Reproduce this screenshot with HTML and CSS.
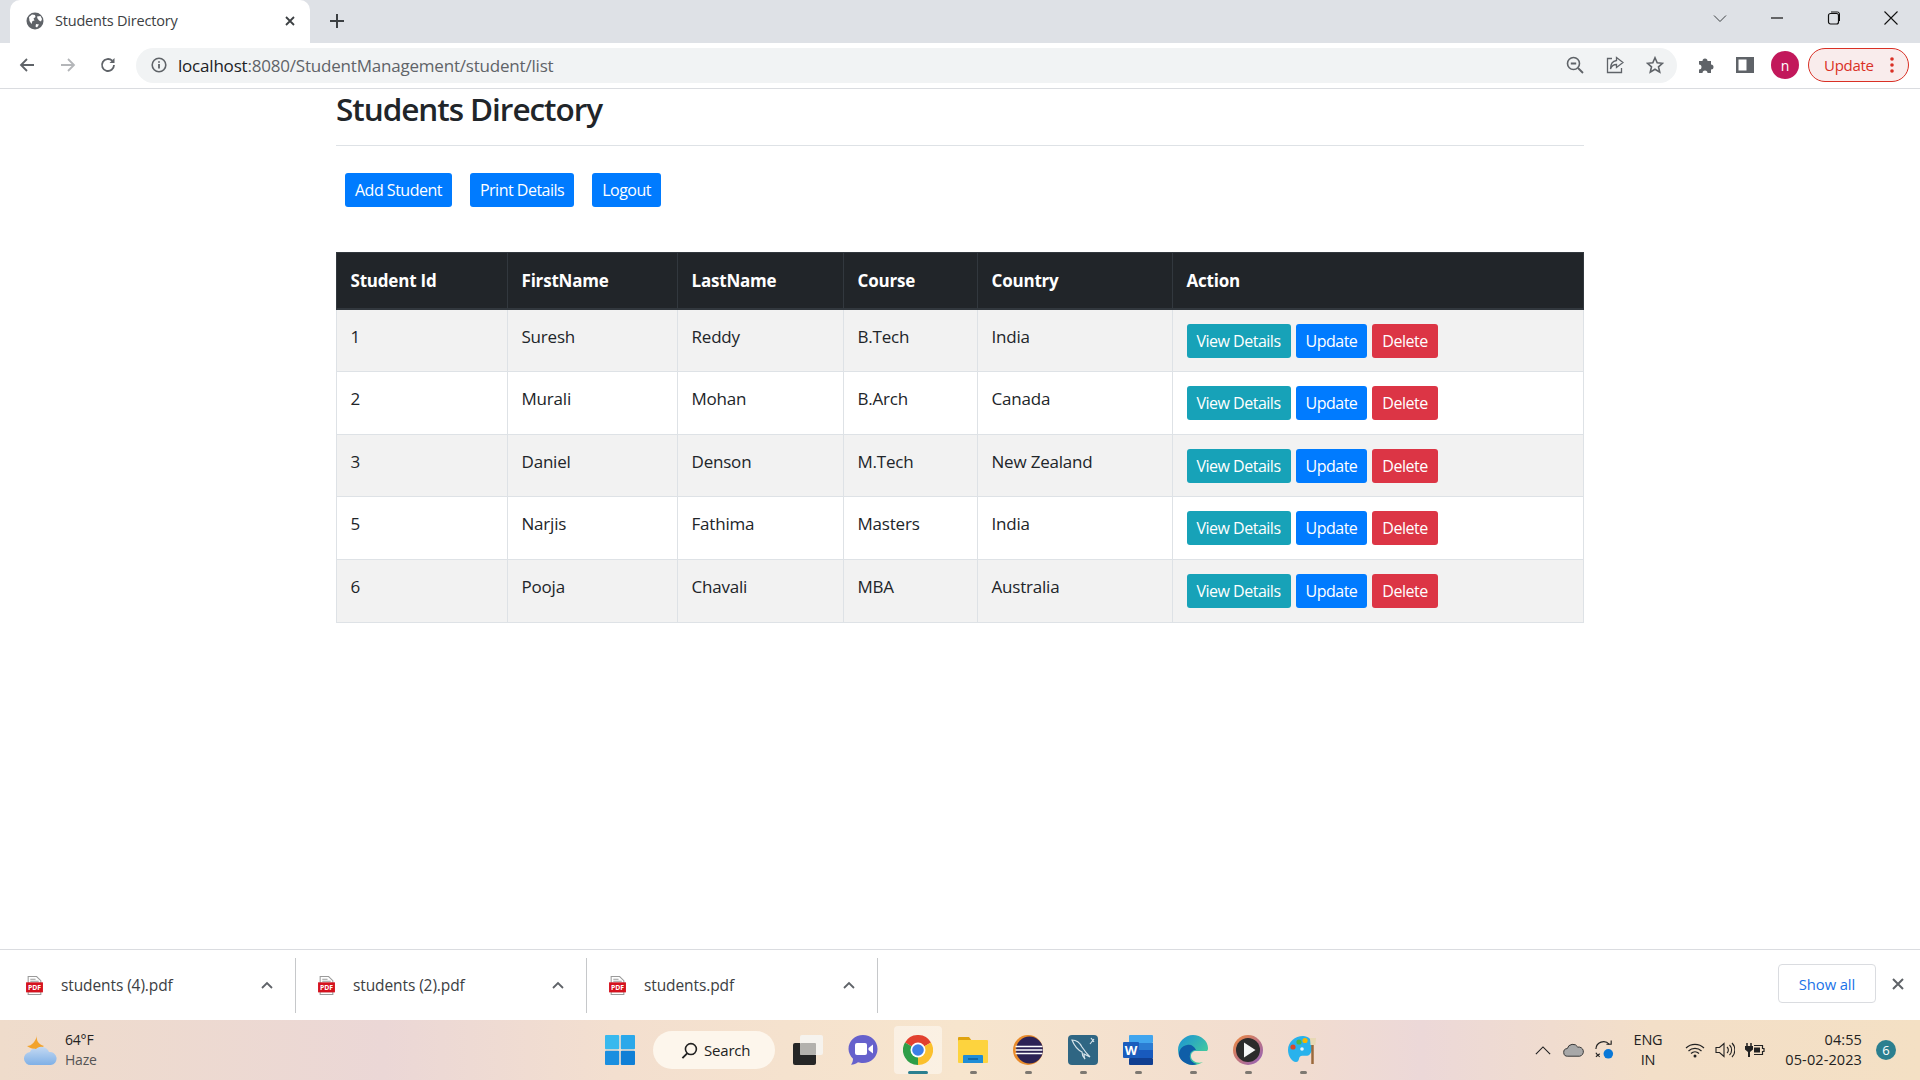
FILE: index.html
```html
<!DOCTYPE html>
<html lang="en">
<head>
  <meta charset="UTF-8" />
  <title>Students Directory</title>
  <link rel="stylesheet" href="styles.css">
</head>
<body>
  <div class="screen">
    <div class="tab-strip">
      <div class="tab">
        <svg class="favicon" viewBox="0 0 18 18"><circle cx="9" cy="9" r="8.5" fill="#5f6368"/><path d="M3 5l3-2.5 3 .5.5 2-2 1.500 1 2-2 .5-1 3L3.500 9z" fill="#fff"/><path d="M11 4.500l3.500-.5 1.500 3-1 2.500-2-1-1.500-2zM10 12l3 .5-2 3-1.500-1z" fill="#fff"/></svg>
        <span class="tab-title">Students Directory</span>
        <svg class="tab-close" viewBox="0 0 12 12"><path d="M2 2l8 8M10 2l-8 8" stroke="#3c4043" stroke-width="1.800" fill="none"/></svg>
      </div>
      <svg class="new-tab" viewBox="0 0 14 14"><path d="M7 0v14M0 7h14" stroke="#3c4043" stroke-width="2" fill="none"/></svg>
      <div class="window-controls">
        <svg viewBox="0 0 14 14"><path d="M1 4.500l6 6 6-6" stroke="#3c4043" stroke-width="1" fill="none"/></svg>
        <svg viewBox="0 0 14 14"><path d="M1 7h12" stroke="#111" stroke-width="1.200" fill="none"/></svg>
        <svg viewBox="0 0 14 14"><rect x="1.500" y="2.500" width="10" height="10.500" rx="2" stroke="#111" stroke-width="1.200" fill="none"/><path d="M4 1h6.500a2 2 0 0 1 2 2v7" stroke="#111" stroke-width="1" fill="none"/></svg>
        <svg viewBox="0 0 14 14"><path d="M.5.500l13 13M13.500.500l-13 13" stroke="#111" stroke-width="1.100" fill="none"/></svg>
      </div>
    </div>

    <div class="toolbar">
      <svg class="nav-icon" viewBox="0 0 16 16"><path d="M15 8H2M8 2L2 8l6 6" stroke="#5f6368" stroke-width="1.800" fill="none"/></svg>
      <svg class="nav-icon" viewBox="0 0 16 16"><path d="M1 8h13M8 2l6 6-6 6" stroke="#b4b6b9" stroke-width="1.800" fill="none"/></svg>
      <svg class="nav-icon" viewBox="0 0 16 16"><path d="M14 8a6 6 0 1 1-1.800-4.300" stroke="#5f6368" stroke-width="1.800" fill="none"/><path d="M14.500 1v5h-5z" fill="#5f6368"/></svg>
      <div class="omnibox">
        <svg class="info-icon" viewBox="0 0 16 16"><circle cx="8" cy="8" r="6.800" stroke="#5f6368" stroke-width="1.600" fill="none"/><path d="M8 7v4.500M8 4.300v1.500" stroke="#5f6368" stroke-width="1.800" fill="none"/></svg>
        <span class="url"><span class="url-host">localhost</span>:8080/StudentManagement/student/list</span>
        <div class="omni-actions">
          <svg viewBox="0 0 18 18"><circle cx="7.500" cy="7.500" r="6" stroke="#5f6368" stroke-width="1.600" fill="none"/><path d="M4.800 7.500h5.400M12 12l5 5" stroke="#5f6368" stroke-width="1.800" fill="none"/></svg>
          <svg viewBox="0 0 18 18"><path d="M6 2.500H1.500v14h14V12" stroke="#5f6368" stroke-width="1.300" fill="none"/><path d="M10.500 1.500l6.500 5-6.500 5V8.500C7.500 8.500 5.500 10 4.500 13c0-5 2.500-8 6-8.500z" stroke="#5f6368" stroke-width="1.300" fill="none"/></svg>
          <svg viewBox="0 0 18 18"><path d="M9 1.800l2.200 5 5.300.5-4 3.500 1.200 5.300L9 13.300l-4.700 2.800 1.200-5.300-4-3.500 5.300-.5z" stroke="#5f6368" stroke-width="1.600" fill="none"/></svg>
        </div>
      </div>
      <svg class="puzzle" viewBox="0 0 18 18"><path d="M2 5h3.500a2.500 2.500 0 1 1 5 0H14v3.500a2.500 2.500 0 1 1 0 5V17h-3.500a2.500 2.500 0 1 0-5 0H2v-3.500a2.500 2.500 0 1 0 0-5z" fill="#5f6368"/></svg>
      <svg class="side-panel" viewBox="0 0 18 18"><path d="M0 1h18v16H0zM2.500 3.500v11h8v-11z" fill="#5f6368" fill-rule="evenodd"/></svg>
      <div class="avatar">n</div>
      <div class="update-pill">
        <span>Update</span>
        <svg viewBox="0 0 4 16"><circle cx="2" cy="2" r="1.800" fill="#d93025"/><circle cx="2" cy="8" r="1.800" fill="#d93025"/><circle cx="2" cy="14" r="1.800" fill="#d93025"/></svg>
      </div>
    </div>

    <main class="page">
      <div class="content">
        <h1 class="title">Students Directory</h1>
        <hr class="rule">
        <div class="top-actions">
          <a class="btn btn-blue">Add Student</a>
          <a class="btn btn-blue">Print Details</a>
          <a class="btn btn-blue">Logout</a>
        </div>
        <table class="students">
          <colgroup>
            <col class="col-id"><col class="col-first"><col class="col-last"><col class="col-course"><col class="col-country"><col>
          </colgroup>
          <thead>
            <tr><th>Student Id</th><th>FirstName</th><th>LastName</th><th>Course</th><th>Country</th><th>Action</th></tr>
          </thead>
          <tbody>
            <tr>
              <td>1</td><td>Suresh</td><td>Reddy</td><td>B.Tech</td><td>India</td>
              <td class="actions"><a class="btn btn-teal">View Details</a><a class="btn btn-blue">Update</a><a class="btn btn-red">Delete</a></td>
            </tr>
            <tr>
              <td>2</td><td>Murali</td><td>Mohan</td><td>B.Arch</td><td>Canada</td>
              <td class="actions"><a class="btn btn-teal">View Details</a><a class="btn btn-blue">Update</a><a class="btn btn-red">Delete</a></td>
            </tr>
            <tr>
              <td>3</td><td>Daniel</td><td>Denson</td><td>M.Tech</td><td>New Zealand</td>
              <td class="actions"><a class="btn btn-teal">View Details</a><a class="btn btn-blue">Update</a><a class="btn btn-red">Delete</a></td>
            </tr>
            <tr>
              <td>5</td><td>Narjis</td><td>Fathima</td><td>Masters</td><td>India</td>
              <td class="actions"><a class="btn btn-teal">View Details</a><a class="btn btn-blue">Update</a><a class="btn btn-red">Delete</a></td>
            </tr>
            <tr>
              <td>6</td><td>Pooja</td><td>Chavali</td><td>MBA</td><td>Australia</td>
              <td class="actions"><a class="btn btn-teal">View Details</a><a class="btn btn-blue">Update</a><a class="btn btn-red">Delete</a></td>
            </tr>
          </tbody>
        </table>
      </div>
    </main>

    <div class="download-bar">
      <div class="download">
        <svg class="pdf" viewBox="0 0 16 18"><path d="M2 .5h8l4 4V7H2zM2 15h12v2.500H2z" fill="#fff" stroke="#9a9a9a"/><path d="M4 3h5M4 5h8" stroke="#9a9a9a"/><rect y="6" width="16" height="9.500" fill="#d5121e"/><text class="pdf-label" x="8" y="13.300" text-anchor="middle">PDF</text></svg>
        <span class="file-name">students (4).pdf</span>
        <svg class="chevron" viewBox="0 0 12 8"><path d="M1 7l5-5 5 5" stroke="#5f6368" stroke-width="1.800" fill="none"/></svg>
      </div>
      <div class="download">
        <svg class="pdf" viewBox="0 0 16 18"><path d="M2 .5h8l4 4V7H2zM2 15h12v2.500H2z" fill="#fff" stroke="#9a9a9a"/><path d="M4 3h5M4 5h8" stroke="#9a9a9a"/><rect y="6" width="16" height="9.500" fill="#d5121e"/><text class="pdf-label" x="8" y="13.300" text-anchor="middle">PDF</text></svg>
        <span class="file-name">students (2).pdf</span>
        <svg class="chevron" viewBox="0 0 12 8"><path d="M1 7l5-5 5 5" stroke="#5f6368" stroke-width="1.800" fill="none"/></svg>
      </div>
      <div class="download">
        <svg class="pdf" viewBox="0 0 16 18"><path d="M2 .5h8l4 4V7H2zM2 15h12v2.500H2z" fill="#fff" stroke="#9a9a9a"/><path d="M4 3h5M4 5h8" stroke="#9a9a9a"/><rect y="6" width="16" height="9.500" fill="#d5121e"/><text class="pdf-label" x="8" y="13.300" text-anchor="middle">PDF</text></svg>
        <span class="file-name">students.pdf</span>
        <svg class="chevron" viewBox="0 0 12 8"><path d="M1 7l5-5 5 5" stroke="#5f6368" stroke-width="1.800" fill="none"/></svg>
      </div>
      <div class="show-all">Show all</div>
      <svg class="bar-close" viewBox="0 0 12 12"><path d="M1 1l10 10M11 1L1 11" stroke="#5f6368" stroke-width="2" fill="none"/></svg>
    </div>

    <div class="taskbar">
      <div class="weather">
        <svg viewBox="0 0 34 32" class="weather-icon">
          <defs>
            <linearGradient id="cloud-fill" x1="0" y1="0" x2="0" y2="1"><stop offset="0" stop-color="#c4d9f2"/><stop offset="1" stop-color="#7fb0e6"/></linearGradient>
          </defs>
          <path d="M13 1c-1 5 1 9 7 11-4 4-12 4-17 0 5 0 9-5 10-11z" fill="#f2a32c"/>
          <path d="M7 31a6.500 6.500 0 0 1-1-13 5 5 0 0 1 6-3 8 8 0 0 1 13 3 6.500 6.500 0 0 1 2 13z" fill="url(#cloud-fill)"/>
        </svg>
        <div class="weather-text">
          <div>64°F</div>
          <div class="weather-sub">Haze</div>
        </div>
      </div>
      <div class="task-center">
        <svg class="start" viewBox="0 0 30 30"><rect width="14.200" height="14.200" rx="1" fill="#38b9ee"/><rect x="15.800" width="14.200" height="14.200" rx="1" fill="#2aa8ea"/><rect y="15.800" width="14.200" height="14.200" rx="1" fill="#1a8fe0"/><rect x="15.800" y="15.800" width="14.200" height="14.200" rx="1" fill="#0f7fd6"/></svg>
        <div class="search-pill">
          <svg viewBox="0 0 18 18"><circle cx="10.500" cy="7.500" r="5.800" stroke="#222" stroke-width="1.700" fill="none"/><path d="M6.500 12L1.500 17" stroke="#222" stroke-width="2" fill="none"/></svg>
          <span>Search</span>
        </div>
        <div class="task-item task-view">
          <svg viewBox="0 0 30 30"><rect x="0" y="8" width="23" height="22" rx="2" fill="#262626"/><rect x="7" y="0" width="23" height="20" rx="2" fill="#f6f3ee"/><rect x="7" y="8" width="16" height="12" rx="1" fill="#b3b1ad"/></svg>
        </div>
        <div class="task-item">
          <svg viewBox="0 0 30 30"><path d="M15 0c8 0 14.500 6 14.500 14S23 28 15 28c-2 0-3.500-.3-5-.8C8 28.700 6 29.600 3 29.800c1.500-2 2-3.800 2-6C2.500 21 .5 18 .5 14 .5 6 7 0 15 0z" fill="#6661cc"/><rect x="7" y="8" width="12" height="12" rx="2" fill="#fff"/><path d="M20.500 13l4.500-3.500v9L20.500 15z" fill="#fff"/></svg>
        </div>
        <div class="task-item is-active">
          <svg viewBox="0 0 30 30"><path d="M15 15L2 7.500A15 15 0 0 1 28 7.500z" fill="#e2412f"/><path d="M15 15l13-7.500A15 15 0 0 1 15 30z" fill="#fbc02d"/><path d="M15 15V30A15 15 0 0 1 2 7.500z" fill="#2e9e48"/><circle cx="15" cy="15" r="7.500" fill="#fff"/><circle cx="15" cy="15" r="5.800" fill="#3d7fe6"/></svg>
          <i class="run-mark run-mark-active"></i>
        </div>
        <div class="task-item">
          <svg viewBox="0 0 30 30"><path d="M0 3a1 1 0 0 1 1-1h10l3 4H0z" fill="#e0a30e"/><rect y="5" width="30" height="23" rx="1" fill="#fdd33e"/><path d="M6 20h18a1 1 0 0 1 1 1v7H5v-7a1 1 0 0 1 1-1z" fill="#1f8dd6"/><path d="M10 24h10" stroke="#0b5c99" stroke-width="1.500"/></svg>
          <i class="run-mark"></i>
        </div>
        <div class="task-item">
          <svg viewBox="0 0 30 30"><circle cx="15" cy="15" r="15" fill="#e98b2a"/><circle cx="16.500" cy="15" r="13.500" fill="#2c2255"/><path d="M2.500 11.500h27M2.500 15h27M2.500 18.500h27" stroke="#fff" stroke-width="1.700"/></svg>
          <i class="run-mark"></i>
        </div>
        <div class="task-item">
          <svg viewBox="0 0 30 30"><rect width="30" height="30" rx="4" fill="#2f6683"/><path d="M4 5c4 0 8 3 10 7 2 3 4 6 8 10l-6-3c0 2 0 3 1 5-2-2-3-4-3-7C10 15 6 10 4 5zM22 9l4-5M23 3l3 4" stroke="#d5e3ea" stroke-width="1.200" fill="none"/></svg>
          <i class="run-mark"></i>
        </div>
        <div class="task-item">
          <svg viewBox="0 0 30 30"><rect x="6" width="24" height="8" rx="1" fill="#41a5ee"/><rect x="6" y="8" width="24" height="7" fill="#2b7cd3"/><rect x="6" y="15" width="24" height="8" fill="#185abd"/><rect x="6" y="23" width="24" height="7" rx="1" fill="#103f91"/><rect y="7" width="16" height="16" rx="1" fill="#1a5cbd"/><text class="word-label" x="8" y="19.500" text-anchor="middle">W</text></svg>
          <i class="run-mark"></i>
        </div>
        <div class="task-item">
          <svg viewBox="0 0 30 30">
            <defs>
              <linearGradient id="edge-top" x1="0" y1="0" x2="1" y2="1"><stop offset="0" stop-color="#1a90d8"/><stop offset="1" stop-color="#4fdc8c"/></linearGradient>
            </defs>
            <path d="M15 0C7 0 0 7 0 15c0 8 7 15 15 15 4 0 7-1 10-3-6 2-12-1-12-6 0-3 2-5 5-5h11c1-1 1-2 1-3C30 6 23 0 15 0z" fill="url(#edge-top)"/>
            <path d="M9 10c-6 1-9 7-8 11 2 6 11 11 18 8-5-1-8-5-7-9 0-3 3-5 6-5-2-4-5-6-9-5z" fill="#0f5ea8"/>
          </svg>
          <i class="run-mark"></i>
        </div>
        <div class="task-item">
          <svg viewBox="0 0 30 30">
            <defs>
              <linearGradient id="player-ring" x1="0" y1="0" x2="1" y2="1"><stop offset="0" stop-color="#f08a3c"/><stop offset="1" stop-color="#8f5fc0"/></linearGradient>
            </defs>
            <circle cx="15" cy="15" r="15" fill="url(#player-ring)"/>
            <circle cx="15" cy="15" r="12" fill="#2b2b2b"/>
            <path d="M11 7.500l11.500 7.500L11 22.500z" fill="#f5f5f5"/>
          </svg>
          <i class="run-mark"></i>
        </div>
        <div class="task-item">
          <svg viewBox="0 0 30 30"><path d="M15 1C7 1 0 7 0 15c0 6 4 12 8 12 4 0 2-5 5-6s7 1 9-2 3-5 3-8C25 5 20 1 15 1z" fill="#29b2ec"/><circle cx="11" cy="7" r="2.600" fill="#4fb548"/><circle cx="17" cy="5.500" r="2.600" fill="#f7b500"/><circle cx="5" cy="12" r="2.600" fill="#d9472b"/><circle cx="14" cy="14" r="1.800" fill="#e8f5fb"/><path d="M24.500 10v19" stroke="#9b6a3c" stroke-width="2.500"/><path d="M22 3h6l-.5 7h-5z" fill="#e8d9b5"/></svg>
          <i class="run-mark"></i>
        </div>
      </div>
      <div class="tray">
        <svg class="tray-chevron" viewBox="0 0 18 10"><path d="M1 9l8-8 8 8" stroke="#222" stroke-width="1.300" fill="none"/></svg>
        <svg class="tray-cloud" viewBox="0 0 22 14"><path d="M5 13.500a4 4 0 0 1-.5-8 6 6 0 0 1 11-1.500 4.800 4.800 0 0 1 2 9.500z" fill="#a8a8a8" stroke="#333" stroke-width="1"/></svg>
        <svg class="tray-sync" viewBox="0 0 22 20"><path d="M2 9a8 8 0 0 1 14-5M2 17l4-3" stroke="#222" stroke-width="1.200" fill="none"/><path d="M13 4h5V0M2 13c1 2 2 3 4 4" stroke="#222" stroke-width="1.200" fill="none"/><circle cx="15" cy="14" r="5" fill="#0a78d7"/></svg>
        <div class="lang"><div>ENG</div><div>IN</div></div>
        <svg class="tray-wifi" viewBox="0 0 20 15"><path d="M1 5a13 13 0 0 1 18 0M3.500 8a9.500 9.500 0 0 1 13 0M6 10.500a6 6 0 0 1 8 0" stroke="#222" stroke-width="1.200" fill="none"/><circle cx="10" cy="13" r="1.500" fill="#222"/></svg>
        <svg class="tray-volume" viewBox="0 0 20 16"><path d="M1 5.500h3.500L9 1.500v13l-4.500-4H1z" stroke="#222" stroke-width="1.100" fill="none"/><path d="M12 5a4 4 0 0 1 0 6M14.500 3a7 7 0 0 1 0 10M17 1a10 10 0 0 1 0 14" stroke="#222" stroke-width="1.100" fill="none"/></svg>
        <svg class="tray-battery" viewBox="0 0 20 16"><path d="M9 3.500h8.500v3H19v3h-1.500v3H9" stroke="#222" stroke-width="1.200" fill="none"/><path d="M9 5.500h6v5H9z" fill="#222"/><path d="M2 1v3.500M6 1v3.500" stroke="#222" stroke-width="1.500" fill="none"/><path d="M0 4h8v3.500L5 10H3L0 7.500zM3 10h2v5H3z" fill="#222"/></svg>
        <div class="clock"><div>04:55</div><div>05-02-2023</div></div>
        <div class="badge">6</div>
      </div>
    </div>
  </div>
</body>
</html>
```

FILE: styles.css
```css
* {
  box-sizing: border-box;
}

body {
  margin: 0;
  font-family: "Open Sans", "Noto Sans", sans-serif;
  color: #212529;
  background-color: #fff;
  overflow: hidden;
}

svg {
  display: block;
  flex: none;
}

.screen {
  width: 1920px;
  height: 1080px;
  display: flex;
  flex-direction: column;
  overflow: hidden;
}

/* browser tabs */
.tab-strip {
  height: 43px;
  flex: none;
  background-color: #dee1e6;
  display: flex;
  align-items: flex-end;
  padding-left: 10px;
}

.tab {
  width: 300px;
  height: 43px;
  background-color: #fff;
  border-radius: 10px 10px 0 0;
  display: flex;
  align-items: center;
  padding: 0 0 2px 16px;
}

.favicon {
  width: 18px;
  height: 18px;
}

.tab-title {
  margin-left: 11px;
  font-size: 14.500px;
  letter-spacing: -0.2px;
  color: #3c4043;
  flex: 1;
}

.tab-close {
  width: 12px;
  height: 12px;
  margin-right: 14px;
}

.new-tab {
  width: 14px;
  height: 14px;
  margin: 0 0 15px 20px;
}

.window-controls {
  margin-left: auto;
  align-self: flex-start;
  display: flex;
  padding: 11px 22px 0 0;
  gap: 43px;
}

.window-controls svg {
  width: 14px;
  height: 14px;
}

/* address bar */
.toolbar {
  height: 46px;
  flex: none;
  background-color: #fff;
  border-bottom: 1px solid #dadce0;
  display: flex;
  align-items: center;
  padding: 0 11px 1px 19px;
}

.nav-icon {
  width: 16px;
  height: 16px;
  margin-right: 24.500px;
}

.omnibox {
  width: 1543px;
  height: 35px;
  margin-left: -4.500px;
  background-color: #f1f3f4;
  border-radius: 18px;
  display: flex;
  align-items: center;
  padding: 0 13px 0 15px;
}

.info-icon {
  width: 16px;
  height: 16px;
}

.url {
  margin-left: 11px;
  font-size: 17px;
  letter-spacing: -0.2px;
  color: #5f6368;
}

.url-host {
  color: #202124;
}

.omni-actions {
  margin-left: auto;
  display: flex;
  gap: 22px;
}

.omni-actions svg {
  width: 18px;
  height: 18px;
}

.puzzle {
  width: 18px;
  height: 18px;
  margin-left: 20px;
}

.side-panel {
  width: 18px;
  height: 18px;
  margin-left: 21px;
}

.avatar {
  width: 28px;
  height: 28px;
  margin-left: 17px;
  border-radius: 50%;
  background-color: #c2185b;
  color: #fff;
  font-size: 14px;
  display: flex;
  align-items: center;
  justify-content: center;
}

.update-pill {
  width: 101px;
  height: 34px;
  margin-left: 9px;
  border: 1px solid #d93025;
  border-radius: 17px;
  background-color: #f9ecec;
  color: #d93025;
  font-size: 15px;
  letter-spacing: -0.3px;
  display: flex;
  align-items: center;
  padding: 0 14px 0 15px;
  justify-content: space-between;
}

.update-pill svg {
  width: 4px;
  height: 16px;
}

/* the page itself */
.page {
  flex: 1;
  background-color: #fff;
  min-height: 0;
}

.content {
  width: 1248px;
  margin: 0 auto;
}

.title {
  margin: 0;
  font-size: 31.500px;
  font-weight: 600;
  line-height: 40px;
  letter-spacing: -1.05px;
}

.rule {
  margin: 16px 0 0;
  border: 0;
  border-top: 1px solid #dee2e6;
}

.top-actions {
  display: flex;
  gap: 18px;
  padding: 27px 0 45px 9px;
}

.btn {
  display: inline-block;
  height: 34px;
  padding: 0 10px;
  font-size: 16px;
  line-height: 34px;
  letter-spacing: -0.5px;
  color: #fff;
  border-radius: 3px;
  white-space: nowrap;
}

.btn-blue {
  background-color: #007bff;
}

.btn-teal {
  background-color: #17a2b8;
}

.btn-red {
  background-color: #dc3545;
}

.students {
  width: 1248px;
  border-collapse: collapse;
  table-layout: fixed;
  font-size: 17px;
  letter-spacing: -0.2px;
}

.col-id { width: 171px; }
.col-first { width: 170px; }
.col-last { width: 166px; }
.col-course { width: 134px; }
.col-country { width: 195px; }

.students th {
  height: 56px;
  padding: 0 13.500px;
  text-align: left;
  font-weight: 700;
  color: #fff;
  background-color: #212529;
  border: 1px solid #32383e;
  border-bottom-width: 2px;
}

.students td {
  height: 62.750px;
  padding: 15px 13.500px 0;
  vertical-align: top;
  border: 1px solid #dee2e6;
}

.students tbody tr:nth-child(odd) {
  background-color: #f2f2f2;
}

.students .actions {
  padding-top: 14px;
}

.actions .btn {
  margin-right: 5px;
}

/* downloads shelf */
.download-bar {
  height: 71px;
  flex: none;
  background-color: #fff;
  border-top: 1px solid #dadce0;
  display: flex;
  align-items: center;
  padding-right: 16px;
}

.download {
  width: 291px;
  height: 55px;
  border-right: 1px solid #c6c8ca;
  display: flex;
  align-items: center;
  padding: 0 22px;
}

.download:first-child {
  width: 296px;
  padding: 0 22px 0 26px;
}

.pdf {
  width: 17px;
  height: 19px;
}

.pdf-label {
  font-size: 6.500px;
  font-weight: 700;
  fill: #fff;
}

.word-label {
  font-size: 13px;
  font-weight: 700;
  fill: #fff;
}

.file-name {
  margin-left: 18px;
  flex: 1;
  font-size: 15.500px;
  letter-spacing: -0.1px;
  color: #3c4043;
}

.chevron {
  width: 12px;
  height: 8px;
}

.show-all {
  margin-left: auto;
  margin-bottom: 3px;
  width: 98px;
  height: 39px;
  border: 1px solid #dadce0;
  border-radius: 4px;
  color: #1a73e8;
  font-size: 14.800px;
  letter-spacing: -0.1px;
  display: flex;
  align-items: center;
  justify-content: center;
}

.bar-close {
  width: 12px;
  height: 12px;
  margin: 0 0 2px 16px;
}

/* windows taskbar */
.taskbar {
  height: 60px;
  flex: none;
  background: linear-gradient(to right, #efdccb 0%, #ebd7d6 20%, #f3dfcf 32%, #f7e5cd 50%, #f1dcd0 68%, #ecd8d8 74%, #f3dfc8 86%, #f4e0c4 100%);
  display: flex;
  align-items: center;
  position: relative;
}

.weather {
  width: 592px;
  display: flex;
  align-items: center;
  padding-left: 24px;
}

.weather-icon {
  width: 34px;
  height: 32px;
}

.weather-text {
  margin-left: 7px;
  font-size: 14px;
  line-height: 20px;
  letter-spacing: -0.2px;
  color: #222;
}

.weather-sub {
  color: #555;
}

.task-center {
  display: flex;
  align-items: center;
  margin-left: 13px;
}

.start {
  width: 30px;
  height: 30px;
}

.search-pill {
  width: 122px;
  height: 38px;
  margin-left: 18px;
  background-color: #fdf6ec;
  border-radius: 19px;
  display: flex;
  align-items: center;
  padding-left: 28px;
  font-size: 15px;
  letter-spacing: -0.2px;
  color: #222;
}

.search-pill svg {
  width: 17px;
  height: 17px;
  margin-right: 6px;
}

.task-item {
  width: 48px;
  height: 48px;
  margin-right: 7px;
  border-radius: 4px;
  display: flex;
  justify-content: center;
  padding-top: 9px;
  position: relative;
}

.task-item svg {
  width: 30px;
  height: 30px;
}

.task-view {
  margin-left: 9px;
}

.is-active {
  background-color: rgba(255, 255, 255, 0.45);
}

.run-mark {
  position: absolute;
  bottom: 0;
  left: 21px;
  width: 7px;
  height: 3px;
  border-radius: 2px;
  background-color: #7d7871;
}

.run-mark-active {
  left: 14px;
  width: 20px;
  background-color: #2b7f8f;
}

.tray {
  margin-left: auto;
  display: flex;
  align-items: center;
  padding-right: 24px;
  color: #222;
  font-size: 14.500px;
}

.tray-chevron {
  width: 16px;
  height: 9px;
}

.tray-cloud {
  width: 21px;
  height: 14px;
  margin-left: 12px;
}

.tray-sync {
  width: 21px;
  height: 20px;
  margin-left: 10px;
}

.lang {
  width: 44px;
  margin-left: 11px;
  text-align: center;
  line-height: 20px;
  letter-spacing: -0.2px;
}

.tray-wifi {
  width: 20px;
  height: 15px;
  margin-left: 15px;
}

.tray-volume {
  width: 20px;
  height: 16px;
  margin-left: 10px;
}

.tray-battery {
  width: 20px;
  height: 16px;
  margin-left: 10px;
}

.clock {
  width: 97px;
  text-align: right;
  line-height: 20px;
  letter-spacing: 0.1px;
}

.badge {
  width: 20px;
  height: 20px;
  margin-left: 14px;
  border-radius: 50%;
  background-color: #2b7f8f;
  color: #fff;
  font-size: 13px;
  display: flex;
  align-items: center;
  justify-content: center;
}
```
